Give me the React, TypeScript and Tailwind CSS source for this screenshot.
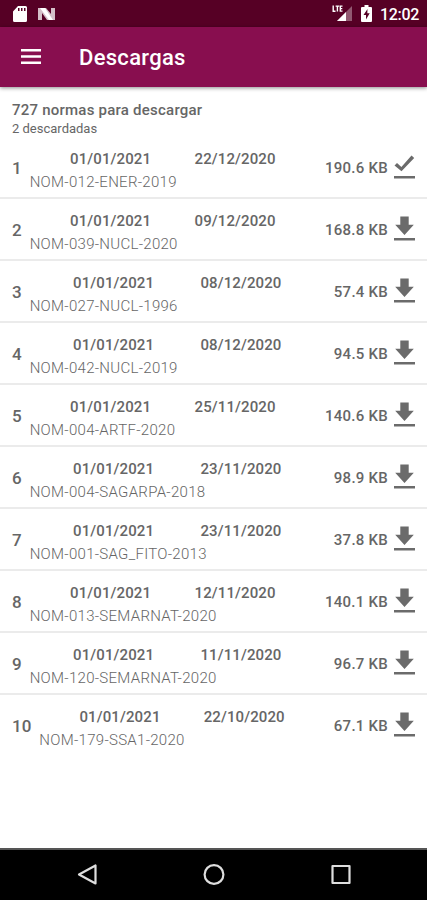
interface Norma {
  id: number;
  nombre: string;
  vigencia: string;
  publicacion: string;
  peso: string;
  descargada?: boolean;
}

const normas: Norma[] = [
  { id: 1, nombre: 'NOM-012-ENER-2019', vigencia: '01/01/2021', publicacion: '22/12/2020', peso: '190.6 KB', descargada: true },
  { id: 2, nombre: 'NOM-039-NUCL-2020', vigencia: '01/01/2021', publicacion: '09/12/2020', peso: '168.8 KB' },
  { id: 3, nombre: 'NOM-027-NUCL-1996', vigencia: '01/01/2021', publicacion: '08/12/2020', peso: '57.4 KB' },
  { id: 4, nombre: 'NOM-042-NUCL-2019', vigencia: '01/01/2021', publicacion: '08/12/2020', peso: '94.5 KB' },
  { id: 5, nombre: 'NOM-004-ARTF-2020', vigencia: '01/01/2021', publicacion: '25/11/2020', peso: '140.6 KB' },
  { id: 6, nombre: 'NOM-004-SAGARPA-2018', vigencia: '01/01/2021', publicacion: '23/11/2020', peso: '98.9 KB' },
  { id: 7, nombre: 'NOM-001-SAG_FITO-2013', vigencia: '01/01/2021', publicacion: '23/11/2020', peso: '37.8 KB' },
  { id: 8, nombre: 'NOM-013-SEMARNAT-2020', vigencia: '01/01/2021', publicacion: '12/11/2020', peso: '140.1 KB' },
  { id: 9, nombre: 'NOM-120-SEMARNAT-2020', vigencia: '01/01/2021', publicacion: '11/11/2020', peso: '96.7 KB' },
  { id: 10, nombre: 'NOM-179-SSA1-2020', vigencia: '01/01/2021', publicacion: '22/10/2020', peso: '67.1 KB' },
];

function StatusBar() {
  return (
    <div className="h-[27px] shrink-0 bg-[#560025] flex items-center justify-between pl-[13px] pr-[8px] text-white">
      <div className="flex items-center gap-[11px]">
        <svg className="w-[14px] h-[16px]" viewBox="0 0 14 16" fill="currentColor">
          <path fillRule="evenodd" d="M5 0h7.5Q14 0 14 1.5v13Q14 16 12.500 16h-11Q0 16 0 14.500V5.500zM5 2v3h1.500V2zM8 2v3h1.500V2zM11 2v3h1.500V2z" />
        </svg>
        <svg className="w-[17px] h-[14px]" viewBox="0 0 17 14" fill="currentColor">
          <path d="M0 1h6l7 12H9L4 6v7H0zM4 1h4l5 6V1h4v12h-5z" opacity=".75" />
          <path d="M2 1h5l8 12h-4z" />
        </svg>
      </div>
      <div className="flex items-center">
        <svg className="w-[20px] h-[17px] mr-[9px]" viewBox="0 0 20 17">
          <path d="M20 1v15H5z" fill="#fff" opacity=".35" />
          <path d="M14 7v9H5z" fill="#fff" />
          <path d="M1.200.500v5.700h2.300M3.600 1.100h3.600M5.400 1.100v5.400M10.500 1.100H8.300v5h2.200M8.300 3.600h2" stroke="#fff" strokeWidth="1.400" fill="none" />
        </svg>
        <svg className="w-[11px] h-[17px] mr-[8px]" viewBox="0 0 11 17">
          <path d="M3.500 0h4v2H10q1 0 1 1v13q0 1-1 1H1q-1 0-1-1V3q0-1 1-1h2.500z" fill="#fff" />
          <path d="M6.500 4 2.500 10h2.500v4.500L8.700 8.300H6.300z" fill="#560025" />
        </svg>
        <span className="text-[16px] leading-[27px] font-medium tracking-[-0.3px] pt-px">12:02</span>
      </div>
    </div>
  );
}

function AppBar() {
  return (
    <header className="relative h-[60px] shrink-0 bg-[#880e4f] flex items-center pl-[21px] text-white shadow-[0_1px_4px_rgba(0,0,0,0.45)]">
      <svg className="w-[20px] h-[15px] mb-[1px]" viewBox="0 0 20 15" fill="currentColor">
        <path d="M0 0h20v2.500H0zM0 6.200h20v2.500H0zM0 12.400h20v2.500H0z" />
      </svg>
      <h1 className="ml-[38px] text-[22px] leading-[30px] font-medium tracking-[0.3px] pt-[2px]">Descargas</h1>
    </header>
  );
}

function EstadoIcon({ descargada }: { descargada?: boolean }) {
  return (
    <svg className="w-[21px] h-[26px] ml-[6px] text-[#6b6b6b]" viewBox="0 0 21 26" fill="currentColor">
      {descargada ? (
        <path d="M.5 11.500 3 8.900l4.400 4.100L17.500 1.400 20.200 4 7.500 17.200z" />
      ) : (
        <path d="M6.300.500h8.400v8.300h5.100L10.500 19 1.200 8.800h5.100z" />
      )}
      <path d="M0 22h21v2.500H0z" />
    </svg>
  );
}

function NormaRow({ norma }: { norma: Norma }) {
  return (
    <li className="h-[62px] flex items-center pl-[12px] pr-[12px] border-b-2 border-[#ebebeb] last:border-transparent">
      <span className="text-[17px] font-medium pt-[3px]">{norma.id}</span>
      <div className="flex-1 ml-[8px] pt-[7px]">
        <div className="flex justify-evenly text-[15px] leading-[23px] font-medium tracking-[0.12px]">
          <span>{norma.vigencia}</span>
          <span className="ml-[3px]">{norma.publicacion}</span>
        </div>
        <p className="text-[15px] leading-[23px] font-light tracking-[0.29px]">{norma.nombre}</p>
      </div>
      <span className="ml-[9px] text-[15px] font-medium tracking-[0.25px] pt-[2px]">{norma.peso}</span>
      <EstadoIcon descargada={norma.descargada} />
    </li>
  );
}

function NavigationBar() {
  return (
    <nav className="h-[52px] shrink-0 bg-black border-t-2 border-[#555] flex items-center justify-center gap-[105px]">
      <svg className="w-[22px] h-[22px]" viewBox="0 0 22 22" fill="none" stroke="#dedede" strokeWidth="2.200" strokeLinejoin="round">
        <path d="M19.500 1.500v18L3 10.500z" />
      </svg>
      <svg className="w-[22px] h-[22px]" viewBox="0 0 22 22" fill="none" stroke="#dedede" strokeWidth="2.200">
        <circle cx="11" cy="10.500" r="9.400" />
      </svg>
      <svg className="w-[22px] h-[22px]" viewBox="0 0 22 22" fill="none" stroke="#dedede" strokeWidth="2.200" strokeLinejoin="round">
        <rect x="2.500" y="2" width="17" height="17" />
      </svg>
    </nav>
  );
}

export default function App() {
  return (
    <div className="w-[427px] h-[900px] flex flex-col overflow-hidden bg-white text-[#666] font-[Roboto,'Liberation_Sans',sans-serif]">
      <StatusBar />
      <AppBar />
      <main className="flex-1 min-h-0 pt-[13px]">
        <div className="h-[37px] pl-[12px]">
          <h2 className="text-[15px] leading-[20px] font-medium tracking-[0.23px]">727 normas para descargar</h2>
          <p className="text-[13px] leading-[17px]">2 descardadas</p>
        </div>
        <ul>
          {normas.map((norma) => (
            <NormaRow key={norma.id} norma={norma} />
          ))}
        </ul>
      </main>
      <NavigationBar />
    </div>
  );
}
